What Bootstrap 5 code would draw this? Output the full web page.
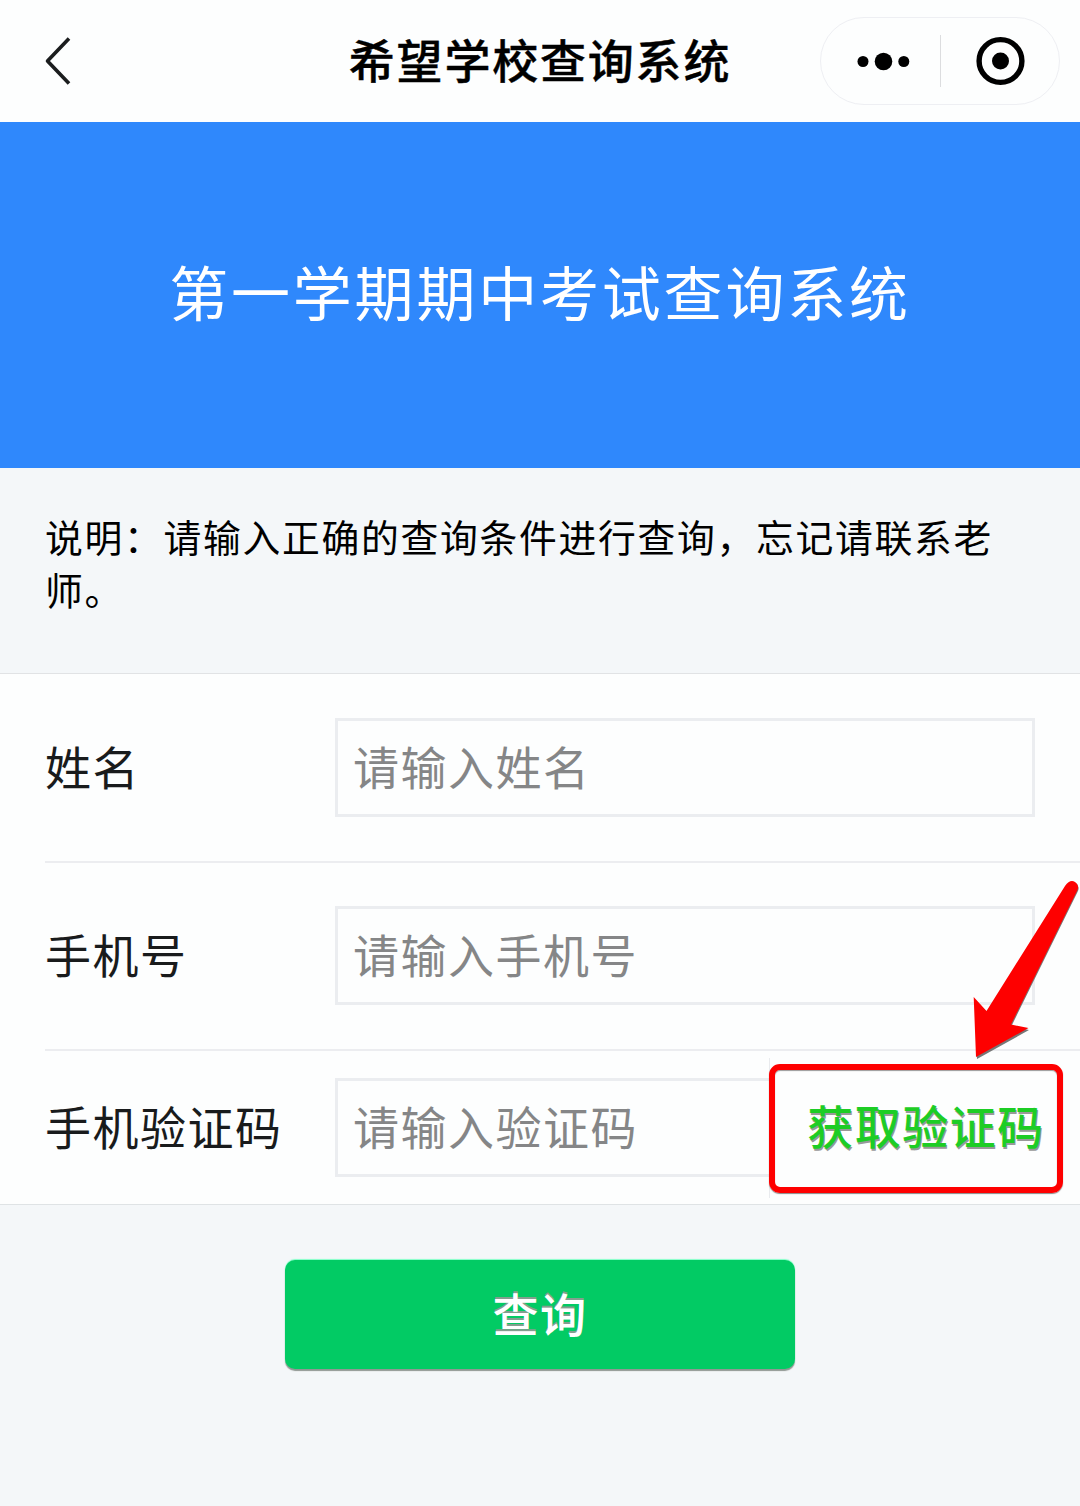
<!DOCTYPE html>
<html lang="zh-CN">
<head>
<meta charset="utf-8">
<meta name="viewport" content="width=device-width, initial-scale=1">
<title>希望学校查询系统</title>
<link href="https://cdn.jsdelivr.net/npm/bootstrap@5.3.0/dist/css/bootstrap.min.css" rel="stylesheet">
<style>
  body { font-family: "Noto Sans CJK SC", sans-serif; background: #f4f7f9; color: #000; min-height: 1506px; overflow-x: hidden; }
  .topbar { height: 122px; background: #fdfefe; padding: 0 20px 0 45px; }
  .topbar-side { flex: 1 1 0; }
  .topbar-title { font-size: 46px; letter-spacing: 1.8px; line-height: 60px; font-weight: 500; -webkit-text-stroke: .4px #000; padding: 0 25px 6px 0; }
  .capsule { width: 240px; height: 88px; border: 1px solid #eeeff3; }
  .capsule-half { flex: 1 1 0; }
  .capsule-line { width: 1px; height: 52px; background: #dcdddf; }
  .hero { height: 346px; background: #2f88fc; color: #fff; font-size: 59px; letter-spacing: 2.8px; line-height: 80px; font-weight: 400; padding-bottom: 8px; }
  .notice { height: 206px; padding: 41px 45px 0; font-size: 37.8px; letter-spacing: 1.7px; line-height: 53px; border-bottom: 1px solid #e1e3e5; }
  .query-form { background: #fdfefe; border-bottom: 1px solid #dfe3e5; padding-left: 45px; }
  .field { height: 188px; padding-right: 45px; border-bottom: 2px solid #ecedf0; }
  .field:first-child { height: 189px; }
  .field:nth-child(2) { padding-bottom: 1px; }
  .field-code { height: 153px; padding-right: 18px; border-bottom: 0; }
  .field-name { width: 290px; flex: none; font-size: 46px; letter-spacing: 1.5px; line-height: 60px; color: #191b1c; padding-bottom: 6px; }
  .field .form-control { height: 99px; min-width: 0; border: 3px solid #ebedf0; border-radius: 0; background: transparent; padding: 0 15px 5px; font-size: 46px; letter-spacing: 1.5px; }
  .field .form-control::placeholder { color: #858687; }
  .field-code .form-control { border-right: 0; }
  .code-cell { flex: none; width: 293px; height: 140px; border-left: 1px solid #e9ebee; }
  .code-btn { width: 294px; height: 129px; margin: 1px 0 0 -1px; padding: 0 0 8px 20px; border: 6px solid #fe0000; border-radius: 11px; box-shadow: 0 1px 1px #888, inset 0 1px 1px #999; font-size: 46px; letter-spacing: 1.5px; color: #1dcd25; font-weight: 500; text-shadow: 1px 2px 0 #999; }
  .pointer { right: 0; top: 878px; width: 110px; height: 184px; pointer-events: none; }
  .submit-btn { width: 510px; height: 109px; margin-top: 55px; background: #02cb64; border: 0; border-radius: 10px; color: #fff; font-size: 46px; letter-spacing: 1.5px; font-weight: 500; text-shadow: 0 -2px 0 #849e8f; box-shadow: 0 -1px 1px #83ffc8, 0 2px 1px #909692; padding: 0 0 5px; }
</style>
<script src="https://cdn.jsdelivr.net/npm/bootstrap@5.3.0/dist/js/bootstrap.bundle.min.js"></script>
</head>
<body class="position-relative">
  <header class="topbar d-flex align-items-center">
    <div class="topbar-side d-flex">
      <svg width="26" height="48" viewBox="0 0 26 48" fill="none" stroke="#1b1d1e" stroke-width="3.6" stroke-linejoin="round"><path d="M24 1.5 2.5 24 24 46.500"/></svg>
    </div>
    <h1 class="topbar-title mb-0 text-nowrap">希望学校查询系统</h1>
    <div class="topbar-side d-flex justify-content-end">
      <div class="capsule rounded-pill d-flex align-items-center">
        <div class="capsule-half d-flex justify-content-center">
          <svg width="64" height="20" viewBox="0 0 64 20"><circle cx="15" cy="10.500" r="5.500"/><circle cx="35.500" cy="10.500" r="8.800"/><circle cx="55.800" cy="10.500" r="5.500"/></svg>
        </div>
        <div class="capsule-line"></div>
        <div class="capsule-half d-flex justify-content-center">
          <svg width="50" height="50" viewBox="0 0 50 50"><circle cx="25.500" cy="25" r="21.400" fill="none" stroke="#000" stroke-width="5.400"/><circle cx="25.500" cy="25" r="8.500"/></svg>
        </div>
      </div>
    </div>
  </header>

  <section class="hero d-flex align-items-center justify-content-center text-nowrap"><span>第一学期期中考试查询系统</span></section>

  <p class="notice mb-0">说明：请输入正确的查询条件进行查询，忘记请联系老师。</p>

  <form id="query" class="query-form">
    <div class="field d-flex align-items-center">
      <label class="field-name" for="name">姓名</label>
      <input class="form-control" id="name" type="text" placeholder="请输入姓名">
    </div>
    <div class="field d-flex align-items-center">
      <label class="field-name" for="phone">手机号</label>
      <input class="form-control" id="phone" type="text" placeholder="请输入手机号">
    </div>
    <div class="field field-code d-flex align-items-center">
      <label class="field-name" for="code">手机验证码</label>
      <input class="form-control" id="code" type="text" placeholder="请输入验证码">
      <div class="code-cell d-flex align-items-center">
        <button type="button" class="btn code-btn flex-shrink-0 text-nowrap">获取验证码</button>
      </div>
    </div>
  </form>

  <div class="d-flex justify-content-center">
    <button type="submit" form="query" class="btn submit-btn">查询</button>
  </div>

  <svg class="pointer position-absolute" viewBox="970 878 110 184"><path d="M1065 886Q1070 879 1075 882Q1080 885 1077 891L1011 1025L1028.500 1029L976.500 1058L974 998L986.500 1011Z" fill="#777" transform="translate(.5 1)"/><path d="M1065 886Q1070 879 1075 882Q1080 885 1077 891L1011 1024.500L1028.500 1028L976 1057L973.700 997L986.500 1011Z" fill="#fe0000"/></svg>
</body>
</html>
